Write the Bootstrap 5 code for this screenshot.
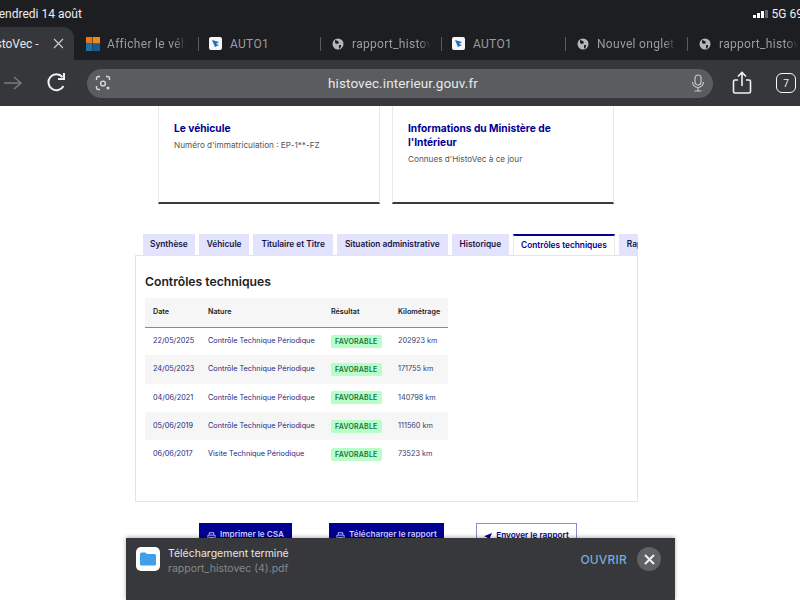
<!doctype html>
<html lang="fr"><head><meta charset="utf-8"><title>HistoVec</title>
<link href="https://cdn.jsdelivr.net/npm/bootstrap@5.3.0/dist/css/bootstrap.min.css" rel="stylesheet">
<style>
html,body{height:600px;overflow:hidden;background:#fff}
body{position:relative;font-family:Inter,"Noto Sans",sans-serif;color:#3a3a3a}
.chrome{height:106px;background:#202124;font-family:Roboto,"Liberation Sans",sans-serif;overflow:hidden}
.statusline{height:27px;background:#1d1e22;color:#eceef0;font-size:12px;padding-top:5px}
.statusline .dateline{margin-left:-7px}
.statusline .netline{margin-right:-3px;font-size:12px}
.sigbars{width:15px;height:8px}
.tabline{height:33px;background:#1d1e22;overflow:hidden;font-size:12px;color:#9a9ca0}
.tabcur{width:76px;margin-left:-2px;height:33px;flex:none;background:#36373a;border-radius:0 11px 0 0;color:#e8e9ea;overflow:hidden;white-space:nowrap}
.tabcur span{margin-left:-14px;width:58px;flex:none;overflow:hidden;text-align:left}
.tabcur svg{margin-left:11px;flex:none}
.tabitem{height:33px;flex:none;white-space:nowrap;overflow:hidden;letter-spacing:.3px;padding-left:10px;gap:8px}
.tabitem svg{flex:none}
.tabfirst{width:124px;padding-left:12px;gap:7px}
.tabfirst span{width:79px;overflow:hidden;-webkit-mask-image:linear-gradient(to right,#000 85%,transparent);mask-image:linear-gradient(to right,#000 85%,transparent)}
.tabauto{width:121px}
.tabauto.tabwider{width:123px}
.tabglobe{width:120px;padding-left:11px}
.tabglobe.tabwider{width:121px}
.tabglobe span{width:79px;overflow:hidden;-webkit-mask-image:linear-gradient(to right,#000 85%,transparent);mask-image:linear-gradient(to right,#000 85%,transparent)}
.tabsep{width:1px;height:14px;background:#5a5b5e;flex:none}
.toolline{height:46px;background:#36373a}
.backarrow{margin-left:1px}
.reloadicon{margin-left:23px}
.shareicon{margin-left:19px}
.tabcount{width:20px;height:20px;font-size:10px;color:#f1f1f1;margin-right:4px}
.urlpill{width:626px;height:29px;flex:none;margin-left:19px;background:#5a5c60;border-radius:15px;color:#e8e9ea;font-size:13.5px;letter-spacing:.1px}
.pagezone{height:494px;overflow:hidden}
.cardsrow{width:456px;margin-left:158px;margin-top:-20px;gap:12px}
.infobox{width:222px;height:118px;border:1px solid #e8e8e8;border-bottom:2px solid #3a3a3a;border-radius:0;padding:34px 50px 0 15px}
.infobox h2{font-size:10.2px;line-height:14px;font-weight:700;color:#000091;margin:0 0 4px}
.infobox p{font-size:8.2px;line-height:12px;margin:0;color:#555;white-space:nowrap}
.tabsblock{width:503px;margin:30px 0 0 135px}
.tabrow{margin-left:8px;gap:4px;border:0;flex-wrap:nowrap;overflow:hidden;height:21px}
.tabrow .nav-link{height:21px;padding:0 8px;border:0;border-radius:0;background:#e3e3fd;color:#161646;font-size:8.3px;line-height:21px;font-weight:600;white-space:nowrap}
.tabrow .nav-item:first-child .nav-link{padding:0 7px}
.tabrow .nav-link.active{background:#fff;color:#000091;border-top:2px solid #000091;line-height:19px;padding:0 7px;border-left:1px solid #e8e8e8;border-right:1px solid #e8e8e8}
.panelbox{height:247px;border:1px solid #e5e5e5;padding:17px 9px 0}
.panelbox h3{font-size:12.2px;line-height:18px;font-weight:600;margin:0 0 7px;color:#222}
.techtable{width:303px;margin:0;table-layout:fixed}
.techtable th{height:29px;background:#f6f6f6;font-size:7.2px;font-weight:600;color:#222;border-bottom:1px solid #8a8a8a;padding:0 8px;vertical-align:middle}
.techtable td{height:28.3px;padding:1px 8px 0;font-size:7.3px;color:#27277f;vertical-align:middle;border:0;white-space:nowrap}
.techtable td:nth-child(3){padding-top:0}
.techtable td:nth-child(4){color:#3c3c6a}
.techtable tr.altrow td{background:#f6f6f6}
.okchip{background:#b8fec9;color:#18753c;font-size:7px;font-weight:600;letter-spacing:.2px;border-radius:2px;padding:2px 4px;line-height:9px;display:inline-block}
.actionrow{margin:21px 0 0 199px;gap:32px}
.actbtn{height:30px;border-radius:0;font-size:8.2px;font-weight:600;padding:0;display:flex;gap:4px;justify-content:center;padding-top:5px}
.actfill{width:93px;background:#000091;color:#cfd0ff;border:0;margin-right:5px}
.actfill.wide{width:115px;margin-right:0}
.actline{width:101px;background:#fff;color:#000091;border:1px solid #8c8cc8}
.toastbar{position:absolute;left:126px;top:538px;width:549px;height:62px;background:#36383b;color:#e8e9ea;font-family:Inter,"Liberation Sans",sans-serif;padding:9px 14px 0 10px;box-shadow:0 -1px 4px rgba(0,0,0,.3)}
.fileicon{width:24px;height:24px;background:#fff;border-radius:5px}
.toasttitle{font-size:10.5px;line-height:14px}
.toastsub{font-size:10.5px;line-height:15px;color:#86888b}
.openlink{color:#7aa9dc;font-size:12px;letter-spacing:.2px;font-weight:500;margin-right:10px}
.closeround{width:24px;height:24px;border-radius:50%;background:#5f6164}
</style></head><body>
<div class="chrome">
  <div class="statusline d-flex justify-content-between align-items-start">
    <span class="dateline">vendredi 14 août</span>
    <span class="netline d-flex align-items-center gap-1"><svg class="sigbars" viewBox="0 0 15 8"><rect x="0" y="5" width="3" height="3" fill="#fff"/><rect x="4" y="3" width="3" height="5" fill="#fff"/><rect x="8" y="1" width="3" height="7" fill="#fff"/><rect x="12" y="0" width="3" height="8" fill="#666"/></svg>5G 69</span>
  </div>
  <div class="tabline d-flex align-items-center">
    <div class="tabcur d-flex align-items-center"><span>HistoVec -</span><svg width="11" height="11" viewBox="0 0 11 11"><path d="M1 1l9 9M10 1l-9 9" stroke="#c9cacc" stroke-width="1.2" fill="none"/></svg></div>
    <div class="tabitem tabfirst d-flex align-items-center"><svg width="14" height="14" viewBox="0 0 14 14"><rect width="6.500" height="6.500" fill="#e8781a"/><rect x="7" width="7" height="6.500" fill="#ee8a1c"/><rect y="7" width="6.500" height="7" fill="#1f6fa8"/><rect x="7" y="7" width="7" height="7" fill="#175c8f"/></svg><span>Afficher le véhicule</span></div>
    <div class="tabsep"></div>
    <div class="tabitem tabauto d-flex align-items-center"><svg width="13" height="13" viewBox="0 0 13 13"><rect width="13" height="13" rx="2" fill="#f3f6fa"/><path d="M3 3l7 2-3 2 3 1-4 2z" fill="#2a6db0"/></svg><span>AUTO1</span></div>
    <div class="tabsep"></div>
    <div class="tabitem tabglobe d-flex align-items-center"><svg width="12" height="12" viewBox="0 0 12 12"><circle cx="6" cy="6" r="5.500" fill="#b5b6b8"/><path d="M3 2l3 1 1 2-2 1-2-1zM7 7l2 0 0 2-2 2z" fill="#1d1e22"/></svg><span>rapport_histovec</span></div>
    <div class="tabsep"></div>
    <div class="tabitem tabauto tabwider d-flex align-items-center"><svg width="13" height="13" viewBox="0 0 13 13"><rect width="13" height="13" rx="2" fill="#f3f6fa"/><path d="M3 3l7 2-3 2 3 1-4 2z" fill="#2a6db0"/></svg><span>AUTO1</span></div>
    <div class="tabsep"></div>
    <div class="tabitem tabglobe tabwider d-flex align-items-center"><svg width="12" height="12" viewBox="0 0 12 12"><circle cx="6" cy="6" r="5.500" fill="#b5b6b8"/><path d="M3 2l3 1 1 2-2 1-2-1zM7 7l2 0 0 2-2 2z" fill="#1d1e22"/></svg><span>Nouvel onglet</span></div>
    <div class="tabsep"></div>
    <div class="tabitem tabglobe d-flex align-items-center"><svg width="12" height="12" viewBox="0 0 12 12"><circle cx="6" cy="6" r="5.500" fill="#b5b6b8"/><path d="M3 2l3 1 1 2-2 1-2-1zM7 7l2 0 0 2-2 2z" fill="#1d1e22"/></svg><span>rapport_histovec</span></div>
  </div>
  <div class="toolline d-flex align-items-center">
    <svg class="backarrow" width="22" height="18" viewBox="0 0 22 18"><path d="M3 9h17M13 3l7 6-7 6" stroke="#77797c" stroke-width="1.500" fill="none"/></svg>
    <svg class="reloadicon" width="22" height="22" viewBox="0 0 22 22"><path d="M17.500 14a8 8 0 1 1-1-9" stroke="#f1f1f1" stroke-width="2" fill="none"/><path d="M18 1v6h-6" stroke="#f1f1f1" stroke-width="2" fill="none"/></svg>
    <div class="urlpill d-flex align-items-center">
      <svg width="16" height="16" viewBox="0 0 16 16" class="ms-2 me-1"><path d="M1.500 5V3.500a2 2 0 0 1 2-2H5M11 1.500h1.500a2 2 0 0 1 2 2V5M1.500 11v1.500a2 2 0 0 0 2 2H5" stroke="#d8d9da" stroke-width="1.400" fill="none"/><circle cx="8" cy="8.500" r="2.400" stroke="#d8d9da" stroke-width="1.400" fill="none"/><circle cx="13" cy="13" r="1.500" fill="#d8d9da"/></svg>
      <span class="flex-grow-1 text-center">histovec.interieur.gouv.fr</span>
      <svg width="14" height="18" viewBox="0 0 14 18" class="me-2"><rect x="4" y="1" width="6" height="10" rx="3" fill="none" stroke="#c5c6c8" stroke-width="1.200"/><path d="M1.500 8a5.500 5.500 0 0 0 11 0M7 13.500v3M3.500 17h7" stroke="#c5c6c8" stroke-width="1.200" fill="none"/></svg>
    </div>
    <svg class="shareicon" width="20" height="24" viewBox="0 0 20 24"><path d="M6 9H3a1.500 1.500 0 0 0-1.500 1.500v10A1.500 1.500 0 0 0 3 22h14a1.500 1.500 0 0 0 1.500-1.500v-10A1.500 1.500 0 0 0 17 9h-3M10 15V2M6 5.500 10 1.500l4 4" stroke="#f1f1f1" stroke-width="1.600" fill="none"/></svg>
    <div class="tabcount ms-auto d-flex align-items-center justify-content-center border border-light rounded-2">7</div>
  </div>
</div>
<main class="pagezone">
  <div class="cardsrow d-flex">
    <div class="infobox bg-white"><h2>Le véhicule</h2><p>Numéro d'immatriculation : EP-1**-FZ</p></div>
    <div class="infobox bg-white"><h2>Informations du Ministère de l'Intérieur</h2><p>Connues d'HistoVec à ce jour</p></div>
  </div>
  <div class="tabsblock">
    <ul class="nav tabrow">
      <li class="nav-item"><a class="nav-link" href="#">Synthèse</a></li>
      <li class="nav-item"><a class="nav-link" href="#">Véhicule</a></li>
      <li class="nav-item"><a class="nav-link" href="#">Titulaire et Titre</a></li>
      <li class="nav-item"><a class="nav-link" href="#">Situation administrative</a></li>
      <li class="nav-item"><a class="nav-link" href="#">Historique</a></li>
      <li class="nav-item"><a class="nav-link active" href="#">Contrôles techniques</a></li>
      <li class="nav-item"><a class="nav-link" href="#">Rapport</a></li>
    </ul>
    <section class="panelbox bg-white">
      <h3>Contrôles techniques</h3>
      <table class="table techtable">
        <colgroup><col style="width:55px"><col style="width:123px"><col style="width:67px"><col style="width:58px"></colgroup>
        <thead><tr><th>Date</th><th>Nature</th><th>Résultat</th><th>Kilométrage</th></tr></thead>
        <tbody>
          <tr><td>22/05/2025</td><td>Contrôle Technique Périodique</td><td><span class="okchip">FAVORABLE</span></td><td>202923 km</td></tr>
          <tr class="altrow"><td>24/05/2023</td><td>Contrôle Technique Périodique</td><td><span class="okchip">FAVORABLE</span></td><td>171755 km</td></tr>
          <tr><td>04/06/2021</td><td>Contrôle Technique Périodique</td><td><span class="okchip">FAVORABLE</span></td><td>140798 km</td></tr>
          <tr class="altrow"><td>05/06/2019</td><td>Contrôle Technique Périodique</td><td><span class="okchip">FAVORABLE</span></td><td>111560 km</td></tr>
          <tr><td>06/06/2017</td><td>Visite Technique Périodique</td><td><span class="okchip">FAVORABLE</span></td><td>73523 km</td></tr>
        </tbody>
      </table>
    </section>
  </div>
  <div class="actionrow d-flex">
    <button class="btn actbtn actfill"><svg width="9" height="9" viewBox="0 0 10 10" class="mt-1"><path d="M2.500 3V.8h5V3M2.500 7.500H1V3.500h8v4H7.500M2.500 6h5v3.200h-5z" stroke="#cfd0ff" fill="none"/></svg>Imprimer le CSA</button>
    <button class="btn actbtn actfill wide"><svg width="9" height="9" viewBox="0 0 10 10" class="mt-1"><path d="M2.500 3V.8h5V3M2.500 7.500H1V3.500h8v4H7.500M2.500 6h5v3.200h-5z" stroke="#cfd0ff" fill="none"/></svg>Télécharger le rapport</button>
    <button class="btn actbtn actline"><svg width="8" height="8" viewBox="0 0 8 8" class="mt-1"><path d="M8 0 0 3.200l3.200 1.300L4.500 8z" fill="#000091"/></svg>Envoyer le rapport</button>
  </div>
</main>
<aside class="toastbar d-flex align-items-start">
  <div class="fileicon d-flex align-items-center justify-content-center me-2"><svg width="16" height="14" viewBox="0 0 16 14"><path d="M0 2a1.500 1.500 0 0 1 1.500-1.500h4L7 2h7.500A1.500 1.500 0 0 1 16 3.500V12a1.500 1.500 0 0 1-1.500 1.500h-13A1.500 1.500 0 0 1 0 12z" fill="#3fa0ea"/></svg></div>
  <div class="flex-grow-1"><div class="toasttitle">Téléchargement terminé</div><div class="toastsub">rapport_histovec (4).pdf</div></div>
  <span class="openlink mt-1">OUVRIR</span>
  <div class="closeround d-flex align-items-center justify-content-center"><svg width="11" height="11" viewBox="0 0 11 11"><path d="M1 1l9 9M10 1l-9 9" stroke="#f0f0f0" stroke-width="2" fill="none"/></svg></div>
</aside>
</body></html>
